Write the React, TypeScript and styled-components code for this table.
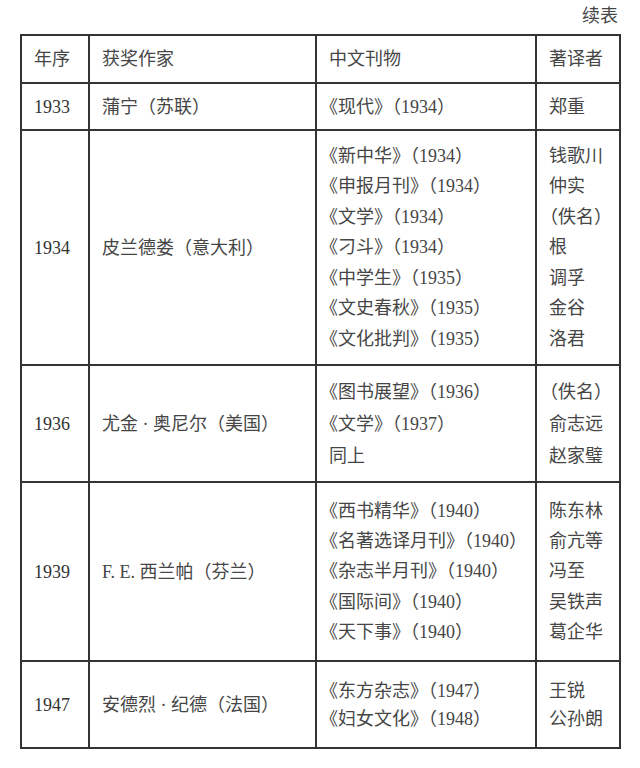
import styled, { createGlobalStyle } from "styled-components";

type Row = {
    year: string,
    author: string,
    journals: string[],
    translators: string[],
    height: number,
    lineHeight: number
}

const rows: Row[] = [
    {year: "1933", author: "蒲宁（苏联）", journals: ["《现代》（1934）"], translators: ["郑重"], height: 47, lineHeight: 30},
    {
        year: "1934",
        author: "皮兰德娄（意大利）",
        journals: [
            "《新中华》（1934）",
            "《申报月刊》（1934）",
            "《文学》（1934）",
            "《刁斗》（1934）",
            "《中学生》（1935）",
            "《文史春秋》（1935）",
            "《文化批判》（1935）",
        ],
        translators: ["钱歌川", "仲实", "（佚名）", "根", "调孚", "金谷", "洛君"],
        height: 235,
        lineHeight: 30.5
    },
    {
        year: "1936",
        author: "尤金 · 奥尼尔（美国）",
        journals: ["《图书展望》（1936）", "《文学》（1937）", "同上"],
        translators: ["（佚名）", "俞志远", "赵家璧"],
        height: 117,
        lineHeight: 32
    },
    {
        year: "1939",
        author: "F. E. 西兰帕（芬兰）",
        journals: [
            "《西书精华》（1940）",
            "《名著选译月刊》（1940）",
            "《杂志半月刊》（1940）",
            "《国际间》（1940）",
            "《天下事》（1940）",
        ],
        translators: ["陈东林", "俞亢等", "冯至", "吴铁声", "葛企华"],
        height: 179,
        lineHeight: 30.2
    },
    {
        year: "1947",
        author: "安德烈 · 纪德（法国）",
        journals: ["《东方杂志》（1947）", "《妇女文化》（1948）"],
        translators: ["王锐", "公孙朗"],
        height: 87,
        lineHeight: 28
    },
];

// opening brackets sit in the right half of their em box, so pull them back
const opensWithBracket = (s: string) => s.startsWith("《") || s.startsWith("（");

export default function App() {
    return (
        <>
            <GlobalStyle/>
            <Page>
                <Caption>续表</Caption>
                <Table>
                    <colgroup>
                        <col style={{width: 68}}/>
                        <col style={{width: 227}}/>
                        <col style={{width: 220}}/>
                        <col style={{width: 84}}/>
                    </colgroup>
                    <thead>
                    <tr>
                        <HeadCell $h={48}>年序</HeadCell>
                        <HeadCell $h={48}>获奖作家</HeadCell>
                        <HeadCell $h={48}>中文刊物</HeadCell>
                        <HeadCell $h={48}>著译者</HeadCell>
                    </tr>
                    </thead>
                    <tbody>
                    {rows.map(row => (
                        <tr key={row.year}>
                            <Cell $h={row.height}><Year>{row.year}</Year></Cell>
                            <Cell $h={row.height}>{row.author}</Cell>
                            <Cell $h={row.height}>
                                {row.journals.map((j, i) => (
                                    <Line key={i} $lh={row.lineHeight} $trim={opensWithBracket(j)}>{j}</Line>
                                ))}
                            </Cell>
                            <Cell $h={row.height}>
                                {row.translators.map((t, i) => (
                                    <Line key={i} $lh={row.lineHeight} $trim={opensWithBracket(t)}>{t}</Line>
                                ))}
                            </Cell>
                        </tr>
                    ))}
                    </tbody>
                </Table>
            </Page>
        </>
    );
}

const GlobalStyle = createGlobalStyle`
  body {
    margin: 0;
    background: #fff;
    font-family: "Liberation Serif", "Noto Sans CJK SC", serif;
  }
`;

const Page = styled.div`
  width: 640px;
  padding: 0 20px 0 20px;
  box-sizing: border-box;
  color: #464646;
  font-size: 18px;
`;

const Caption = styled.div`
  height: 34px;
  line-height: 32px;
  text-align: right;
  padding-right: 2px;
`;

const Table = styled.table`
  width: 600px;
  border-collapse: collapse;
  table-layout: fixed;
`;

const HeadCell = styled.th<{ $h: number }>`
  height: ${(p) => p.$h}px;
  box-sizing: border-box;
  border: 2px solid #333;
  padding: 0 12px;
  text-align: left;
  font-weight: normal;
  line-height: 30px;
`;

const Cell = styled.td<{ $h: number }>`
  height: ${(p) => p.$h}px;
  box-sizing: border-box;
  border: 2px solid #333;
  padding: 0 12px;
  vertical-align: middle;
  line-height: 30px;
  white-space: nowrap;
`;

const Year = styled.span`
  color: #333;
`;

const Line = styled.div<{ $lh: number, $trim: boolean }>`
  line-height: ${(p) => p.$lh}px;
  text-indent: ${(p) => (p.$trim ? "-9px" : "0")};
`;
